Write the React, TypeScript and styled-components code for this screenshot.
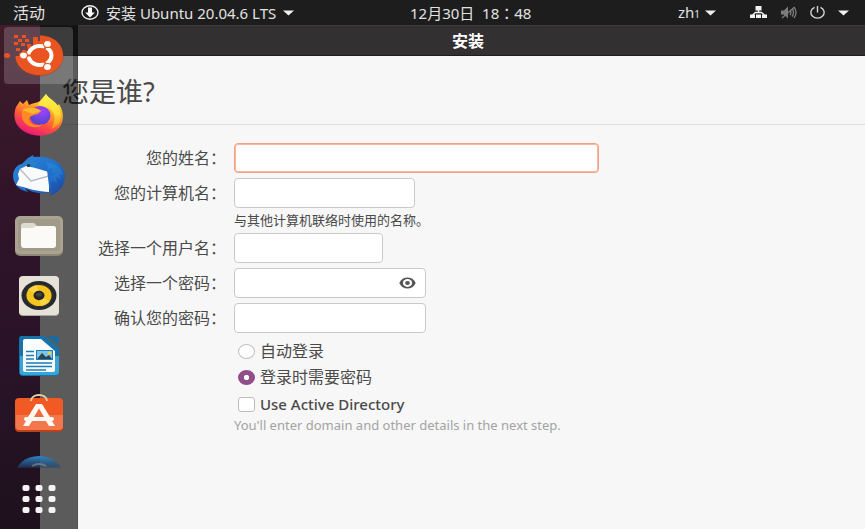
import React, { useState } from "react";
import styled, { createGlobalStyle } from "styled-components";

const GlobalStyle = createGlobalStyle`
  * { box-sizing: border-box; }
  html, body, #root { height: 100%; margin: 0; }
  body {
    overflow: hidden;
    font-family: "Noto Sans", "Noto Sans CJK SC", sans-serif;
    color: #4a4a4a;
  }
  button, input { font: inherit; color: inherit; margin: 0; }
`;

const Desktop = styled.div`
  display: flex;
  flex-direction: column;
  height: 100vh;
  overflow: hidden;
  background: linear-gradient(#47202d, #35152c 35%, #2b142a 70%, #20121f);
`;

const TopBar = styled.header`
  display: flex;
  align-items: center;
  flex: none;
  height: 25px;
  padding: 0 16px 0 13px;
  background: #1d1d1d;
  color: #e2e2e2;
`;

const BarStart = styled.div`
  display: flex;
  flex: 5 1 0;
  gap: 36px;
`;

const BarEnd = styled.div`
  display: flex;
  flex: 4 1 0;
  justify-content: flex-end;
  gap: 34px;
`;

const BarButton = styled.button<{ $gap?: number; $size?: number }>`
  display: flex;
  align-items: center;
  gap: ${(p) => p.$gap ?? 5}px;
  padding: 0;
  border: 0;
  background: none;
  font-size: ${(p) => p.$size ?? 15}px;
  line-height: 24px;
  white-space: nowrap;
  svg { display: block; flex: none; }
`;

const Clock = styled(BarButton)`
  font-family: "Noto Sans", "Noto Sans CJK TC", sans-serif;
`;

const LayoutIndex = styled.small`
  font-size: 10px;
`;

const Workspace = styled.div`
  position: relative;
  display: flex;
  flex: 1;
  min-height: 0;
`;

const Dock = styled.nav`
  position: absolute;
  top: 0;
  bottom: 0;
  left: 0;
  display: flex;
  flex-direction: column;
  width: 78px;
  padding: 2px 4px 0;
  border-right: 1px solid rgba(0, 0, 0, 0.1);
`;

const DockShade = styled.div`
  position: absolute;
  top: 0;
  bottom: 0;
  left: 0;
  width: 78px;
  background: linear-gradient(90deg, rgba(0, 0, 0, 0.06) 40px, rgba(0, 0, 0, 0.63) 40px);
`;

const DockList = styled.div`
  display: flex;
  flex: 1;
  flex-direction: column;
  gap: 3px;
  min-height: 0;
  overflow: hidden;
`;

const DockItem = styled.button<{ $active?: boolean }>`
  position: relative;
  display: flex;
  flex: none;
  align-items: center;
  justify-content: center;
  height: 57px;
  padding: 0;
  border: 0;
  border-radius: 4px;
  background: ${(p) => (p.$active ? "rgba(255, 255, 255, 0.18)" : "none")};
  svg { display: block; }
`;

const RunningDot = styled.span`
  position: absolute;
  left: 0;
  width: 6px;
  height: 5px;
  border-radius: 50%;
  background: #e95420;
`;

const AppsButton = styled(DockItem)`
  height: 61px;
`;

const Window = styled.main`
  display: flex;
  flex: 1;
  flex-direction: column;
  min-width: 0;
  margin: 0 -31px 0 40px;
  background: #f7f7f7;
`;

const TitleBar = styled.div`
  height: 31px;
  border-top: 1px solid #3d3c3c;
  border-bottom: 1px solid #1f1e1e;
  background: #323030;
  color: #fff;
  font-size: 16px;
  font-weight: 700;
  line-height: 30px;
  text-align: center;
`;

const Heading = styled.h1`
  margin: 0;
  height: 69px;
  padding-left: 22px;
  border-bottom: 1px solid #dedede;
  font-size: 27px;
  font-weight: 400;
  line-height: 72px;
`;

const Form = styled.form`
  display: grid;
  grid-template-columns: 186px minmax(0, 1fr);
  column-gap: 8px;
  row-gap: 5px;
  padding-top: 18px;
`;

const FieldLabel = styled.label`
  font-size: 16px;
  line-height: 30px;
  text-align: right;
`;

const Field = styled.div<{ $width: number }>`
  display: flex;
  align-items: center;
  width: ${(p) => p.$width}px;
  max-width: 100%;
  height: 30px;
  border: 1px solid #c9c9c9;
  border-radius: 4px;
  background: #fff;
  &:has(input:focus) {
    border-color: #f2a183;
    box-shadow: inset 0 0 0 1px #f7b9a2;
  }
`;

const TextInput = styled.input`
  flex: 1;
  min-width: 0;
  height: 100%;
  padding: 0 8px;
  border: 0;
  outline: 0;
  background: none;
  font-size: 14px;
  caret-color: transparent;
`;

const RevealButton = styled.button`
  display: flex;
  padding: 0 9px;
  border: 0;
  background: none;
`;

const Hint = styled.p<{ $muted?: boolean }>`
  grid-column: 2;
  margin: 0;
  color: ${(p) => (p.$muted ? "#a3a3a3" : "#4a4a4a")};
  font-size: 13px;
  line-height: 15px;
`;

const Choices = styled.div`
  grid-column: 2;
  display: flex;
  flex-direction: column;
  align-items: flex-start;
`;

const Choice = styled.label<{ $latin?: boolean }>`
  display: flex;
  align-items: center;
  gap: 5px;
  padding-left: 4px;
  font-size: ${(p) => (p.$latin ? 15 : 16)}px;
  font-weight: ${(p) => (p.$latin ? 500 : 400)};
  line-height: 26px;
  height: ${(p) => (p.$latin ? 28 : 26)}px;
`;

const Radio = styled.input`
  appearance: none;
  width: 17px;
  height: 15px;
  border: 1px solid #c0c0c0;
  border-radius: 50%;
  background: #fff;
  &:checked {
    border-color: #924d8b;
    background: radial-gradient(ellipse 3px 3px, #fff 80%, #924d8b 100%);
  }
`;

const Check = styled.input`
  appearance: none;
  width: 17px;
  height: 15px;
  border: 1px solid #bdbdbd;
  border-radius: 3px;
  background: #fff;
  &:checked { background: #924d8b; }
`;

const Caret = () => (
  <svg width="11" height="6" viewBox="0 0 11 6"><path d="M0 .5h11L5.5 5.5z" fill="#f0f0f0" /></svg>
);

const InstallerIcon = () => (
  <svg width="18" height="16" viewBox="0 0 18 16">
    <ellipse cx="9" cy="7.500" rx="8" ry="6.800" fill="none" stroke="#eee" strokeWidth="1.400" />
    <path d="M7 2.500h4v5h2.800L9 12.500 4.200 7.500H7z" fill="#fff" />
  </svg>
);

const NetworkIcon = () => (
  <svg width="17" height="14" viewBox="0 0 17 14" fill="#f2f2f2">
    <path d="M5.500 0h6v4.500h-6zM0 8.500h5v3.500H0zM6 8.500h5v3.500H6zM12 8.500h5v3.500h-5z" />
    <path d="M8.500 4v3M2.500 9 5.500 6.500h6L14.500 9" fill="none" stroke="#f2f2f2" strokeWidth="1.300" />
  </svg>
);

const MutedIcon = () => (
  <svg width="17" height="14" viewBox="0 0 17 14" fill="none" stroke="#7d7d7d" strokeWidth="1.300">
    <path d="M1 4.500h3l4-4v12L4 8.500H1z" fill="#7d7d7d" stroke="none" />
    <path d="M10 4q1.800 2.500 0 5M12 2.500q3 4 0 8M14 1q4 5.500 0 11M2 12 14 1.500" />
  </svg>
);

const PowerIcon = () => (
  <svg width="15" height="14" viewBox="0 0 15 14" fill="none" stroke="#d5d5d5" strokeWidth="1.400">
    <path d="M4.500 1.300a6.600 5.700 0 1 0 6 0M7.500 0v6.500" />
  </svg>
);

const EyeIcon = () => (
  <svg width="17" height="12" viewBox="0 0 17 12">
    <path d="M.300 6C2 2.300 5 .5 8.500 .5S15 2.300 16.700 6C15 9.700 12 11.500 8.500 11.500S2 9.700 .300 6z" fill="#555" />
    <ellipse cx="8.500" cy="6" rx="4.600" ry="3.900" fill="#fff" />
    <ellipse cx="8.500" cy="6" rx="2.400" ry="2.100" fill="#555" />
  </svg>
);

const UbuntuIcon = () => (
  <svg width="52" height="44" viewBox="0 0 52 44">
    <path d="M27 2C41 2 50.500 11 50.500 22S40 42 27 42C14 42 3 33 2 23H9V18H14V13H20V8H27z" fill="#b33c14" opacity=".6" />
    <path d="M27 1.500C41 1.500 50 10.500 50 21.500S40 41 26.500 41C13 41 3 33 2.500 22H10V17H15V12H20V7H27z" fill="#e95420" />
    <g fill="#e95420">
      <path d="M1 1h4v3H1zM9 1h4v3H9zM5 5h4v3H5zM12 5h4v3h-4zM1 8h4v3H1zM8 9h4v3H8zM20 3h5v4h-5zM14 10h4v3h-4zM3 14h4v3H3zM9 16h4v3H9z" />
    </g>
    <ellipse cx="27" cy="21.500" rx="11.500" ry="9.500" fill="none" stroke="#fff" strokeWidth="4" />
    <path d="M27 21.500 9 21.500M27 21.500 37 7M27 21.500 37 36" stroke="#e95420" strokeWidth="2" />
    <ellipse cx="27" cy="21.500" rx="9" ry="7.300" fill="#e95420" />
    <g fill="#fff" stroke="#e95420" strokeWidth="1.200">
      <ellipse cx="10.500" cy="21.500" rx="4" ry="3.500" />
      <ellipse cx="34.500" cy="10" rx="4" ry="3.500" />
      <ellipse cx="34.500" cy="33" rx="4" ry="3.500" />
    </g>
  </svg>
);

const FirefoxIcon = () => (
  <svg width="52" height="44" viewBox="0 1 52 44">
    <defs>
      <linearGradient id="fox" x1=".8" y1="0" x2=".3" y2="1">
        <stop offset="0" stopColor="#fff04a" /><stop offset=".35" stopColor="#ffae24" />
        <stop offset=".65" stopColor="#ff563c" /><stop offset="1" stopColor="#e7127f" />
      </linearGradient>
      <radialGradient id="globe" cx=".6" cy=".25" r=".8">
        <stop offset="0" stopColor="#a043ff" /><stop offset="1" stopColor="#4d43c9" />
      </radialGradient>
      <linearGradient id="flame" x1=".6" y1="0" x2=".5" y2="1">
        <stop offset="0" stopColor="#fff44f" /><stop offset=".5" stopColor="#ffdd38" /><stop offset="1" stopColor="#ff8a16" />
      </linearGradient>
    </defs>
    <path d="M3 14 7 8 10 11 14 7 16 12C20 10 24 10 27 8L33 1C35 6 38 8 42 10L44 13 46 11C52 20 51 31 44 37C34 45 18 44 9 37C1 31 0 22 3 14z" fill="url(#fox)" />
    <path d="M33 1C36 6 43 8 46 15C50 25 47 33 38 36C44 27 42 16 32 14L25 12C27 7 31 5 33 1z" fill="url(#flame)" />
    <ellipse cx="27" cy="22.500" rx="10.500" ry="9.500" fill="url(#globe)" />
    <path d="M9 17C15 13 23 14 28 18L25 21C20 22 18 23 16 25C16 31 23 34 30 31C24 38 10 33 9 24z" fill="#ff8a24" />
    <path d="M9 17C15 14 23 14 28 18L20 21z" fill="#ffb52c" />
  </svg>
);

const ThunderbirdIcon = () => (
  <svg width="52" height="44" viewBox="0 0 52 44">
    <defs>
      <linearGradient id="bird" x1="0" y1="0" x2="1" y2="1">
        <stop offset="0" stopColor="#2c87dc" /><stop offset=".5" stopColor="#2271cb" /><stop offset="1" stopColor="#1c459f" />
      </linearGradient>
    </defs>
    <path d="M9 10C13 6 15 3 21 1L20 3C37 1 52 9 52 22C52 32 46 39 36 42L39 37C28 42 18 38 12 34L15 38C5 36 0 29 0 22C0 15 5 10 9 10z" fill="url(#bird)" />
    <path d="M33 8C42 9 49 13 50 21L46 20 48 25 43 23 44 29 38 25z" fill="#2f9be3" opacity=".35" />
    <path d="M7 15 13 12C19 13 26 15 36 18L38 23 36 32 36 38C26 38 13 34 3 31L6 25 5 20z" fill="#f9fafb" />
    <path d="m7 15 11 12 18-5" fill="none" stroke="#b6bcc2" strokeWidth="1.300" />
    <path d="M9 11C13 6 22 6 24 10C20 15 14 11 9 11z" fill="#2a7fc9" />
    <ellipse cx="15.500" cy="11.500" rx="1.800" ry="1.500" fill="#24344a" />
    <path d="M34 16 40 14 38 19 44 18 38 24 42 25 37 29 39 36 36 32z" fill="#236dcc" />
  </svg>
);

const FilesIcon = () => (
  <svg width="52" height="44" viewBox="0 0 52 44">
    <rect x="2" y="3" width="48" height="39" rx="5" fill="#8e8676" />
    <rect x="2" y="2" width="48" height="38" rx="5" fill="#aaa391" />
    <rect x="5" y="5" width="42" height="32" rx="3" fill="#a29a88" />
    <path d="M8 12q0-3 3-3h10l3 3h16q3 0 3 3v6H8z" fill="#dedad0" />
    <path d="M8 16q0-2 2-2h10l3-2h17q3 0 3 3v16q0 3-3 3H11q-3 0-3-3z" fill="#fbfaf7" />
  </svg>
);

const RhythmboxIcon = () => (
  <svg width="52" height="44" viewBox="0 0 52 44">
    <rect x="6" y="3" width="40" height="39" rx="4" fill="#aaa69c" />
    <rect x="6" y="2" width="40" height="39" rx="4" fill="#e7e2d7" />
    <ellipse cx="26" cy="21.500" rx="17.500" ry="14.500" fill="#252a31" />
    <ellipse cx="26" cy="21.500" rx="14" ry="11.500" fill="#37312a" />
    <ellipse cx="26" cy="21.500" rx="12.500" ry="10.500" fill="#f4c51d" />
    <path d="m26 21.500-11-6q4-4 9-4.500zM26 21.500l11 6q-4 4-9 4.500z" fill="#ffdf60" opacity=".6" />
    <ellipse cx="26" cy="21.500" rx="5.500" ry="4.700" fill="#24252a" />
    <ellipse cx="26" cy="20.500" rx="3" ry="2" fill="#414247" />
  </svg>
);

const WriterIcon = () => (
  <svg width="52" height="44" viewBox="0 0 52 44">
    <path d="M8 2h23l15 12v24q0 4-4 4H10q-4 0-4-4V6q0-4 2-4z" fill="#1572aa" />
    <path d="M7 22h39v16q0 3-4 3H10q-3 0-3-3z" fill="#38a4d8" />
    <path d="M34 2h10q2 0 2 2v7z" fill="#176ba1" />
    <path d="M10 7q0-2 2-2h16l14 12v19q0 2-2 2H12q-2 0-2-2z" fill="#fafcfd" />
    <path d="M13 17.500h8M13 21.500h8M13 25h8M13 29h26M13 32.500h26M13 36h20" stroke="#187fb7" strokeWidth="1.600" />
    <path d="M23 16h17v10H23z" fill="#187fb7" />
    <path d="M24 17h15v8H24z" fill="#79c6e9" />
    <path d="m24 25 5-6 4 4 3-2 3 4z" fill="#34444d" />
    <ellipse cx="36.500" cy="19" rx="1.800" ry="1.500" fill="#f2d044" />
  </svg>
);

const SoftwareIcon = () => (
  <svg width="52" height="44" viewBox="0 3 52 44">
    <rect x="2" y="8" width="48" height="33" rx="4" fill="#b8421a" />
    <rect x="2" y="7" width="48" height="32" rx="4" fill="#f15a24" />
    <path d="M3 24h47v11q0 4-4 4H6q-3 0-3-4z" fill="#f4774b" />
    <path d="M18 10C18 2 34 2 34 10" fill="none" stroke="#e8d39c" strokeWidth="1.800" />
    <path d="M23 13h6l8 13h2q2 0 2 2t-2 2l3 5h-6l-3-5H19l-3 5h-6l3-5q-2 0-2-2t2-2h2z" fill="#fff8f4" />
    <path d="m26 17.500 5 8.500H21z" fill="#f2693b" />
  </svg>
);

const HelpIcon = () => (
  <svg width="52" height="44" viewBox="0 0 52 44">
    <defs>
      <linearGradient id="help" x1="0" y1="0" x2="0" y2="1">
        <stop offset="0" stopColor="#3184c8" /><stop offset=".25" stopColor="#204a76" stopOpacity=".7" /><stop offset=".35" stopColor="#1b3d63" stopOpacity="0" />
      </linearGradient>
    </defs>
    <ellipse cx="26" cy="22" rx="24" ry="20" fill="url(#help)" />
    <path d="M19 12q7-4 14 0" fill="none" stroke="#9a8d86" strokeWidth="2" opacity=".6" />
  </svg>
);

const AppsIcon = () => (
  <svg width="34" height="28" viewBox="0 0 34 28" fill="#f4f4f4">
    {[0, 11, 22].map((y) => [0, 13, 26].map((x) => (
      <rect key={x + "-" + y} x={x + 0.5} y={y} width="7" height="6" rx="2" />
    )))}
  </svg>
);

const dockApps = [
  { name: "安装 Ubuntu", Icon: UbuntuIcon },
  { name: "Firefox", Icon: FirefoxIcon },
  { name: "Thunderbird", Icon: ThunderbirdIcon },
  { name: "文件", Icon: FilesIcon },
  { name: "Rhythmbox", Icon: RhythmboxIcon },
  { name: "LibreOffice Writer", Icon: WriterIcon },
  { name: "Ubuntu Software", Icon: SoftwareIcon },
  { name: "帮助", Icon: HelpIcon },
];

export default function App() {
  const [login, setLogin] = useState("password");
  const [visible, setVisible] = useState(false);

  return (
    <Desktop>
      <GlobalStyle />
      <TopBar>
        <BarStart>
          <BarButton $size={16}>活动</BarButton>
          <BarButton $gap={7}><InstallerIcon />安装 Ubuntu 20.04.6 LTS<Caret /></BarButton>
        </BarStart>
        <Clock>12月30日&nbsp; 18：48</Clock>
        <BarEnd>
          <BarButton><span>zh<LayoutIndex>1</LayoutIndex></span><Caret /></BarButton>
          <BarButton $gap={13} aria-label="系统菜单"><NetworkIcon /><MutedIcon /><PowerIcon /><Caret /></BarButton>
        </BarEnd>
      </TopBar>
      <Workspace>
        <Window>
          <TitleBar>安装</TitleBar>
          <Heading>您是谁?</Heading>
          <Form onSubmit={(e) => e.preventDefault()}>
            <FieldLabel htmlFor="name">您的姓名：</FieldLabel>
            <Field $width={365}><TextInput id="name" autoFocus /></Field>
            <FieldLabel htmlFor="host">您的计算机名：</FieldLabel>
            <Field $width={181}><TextInput id="host" /></Field>
            <Hint>与其他计算机联络时使用的名称。</Hint>
            <FieldLabel htmlFor="user">选择一个用户名：</FieldLabel>
            <Field $width={149}><TextInput id="user" /></Field>
            <FieldLabel htmlFor="pass">选择一个密码：</FieldLabel>
            <Field $width={192}>
              <TextInput id="pass" type={visible ? "text" : "password"} />
              <RevealButton type="button" aria-label="显示密码" onClick={() => setVisible(!visible)}><EyeIcon /></RevealButton>
            </Field>
            <FieldLabel htmlFor="confirm">确认您的密码：</FieldLabel>
            <Field $width={192}><TextInput id="confirm" type="password" /></Field>
            <Choices>
              <Choice>
                <Radio type="radio" name="login" checked={login === "auto"} onChange={() => setLogin("auto")} />
                自动登录
              </Choice>
              <Choice>
                <Radio type="radio" name="login" checked={login === "password"} onChange={() => setLogin("password")} />
                登录时需要密码
              </Choice>
              <Choice $latin><Check type="checkbox" />Use Active Directory</Choice>
              <Hint $muted>You'll enter domain and other details in the next step.</Hint>
            </Choices>
          </Form>
        </Window>
        <DockShade />
        <Dock aria-label="Dock">
          <DockList>
            {dockApps.map(({ name, Icon }, i) => (
              <DockItem key={name} $active={i === 0} aria-label={name}>
                {i === 0 && <RunningDot />}
                <Icon />
              </DockItem>
            ))}
          </DockList>
          <AppsButton aria-label="显示应用程序"><AppsIcon /></AppsButton>
        </Dock>
      </Workspace>
    </Desktop>
  );
}
